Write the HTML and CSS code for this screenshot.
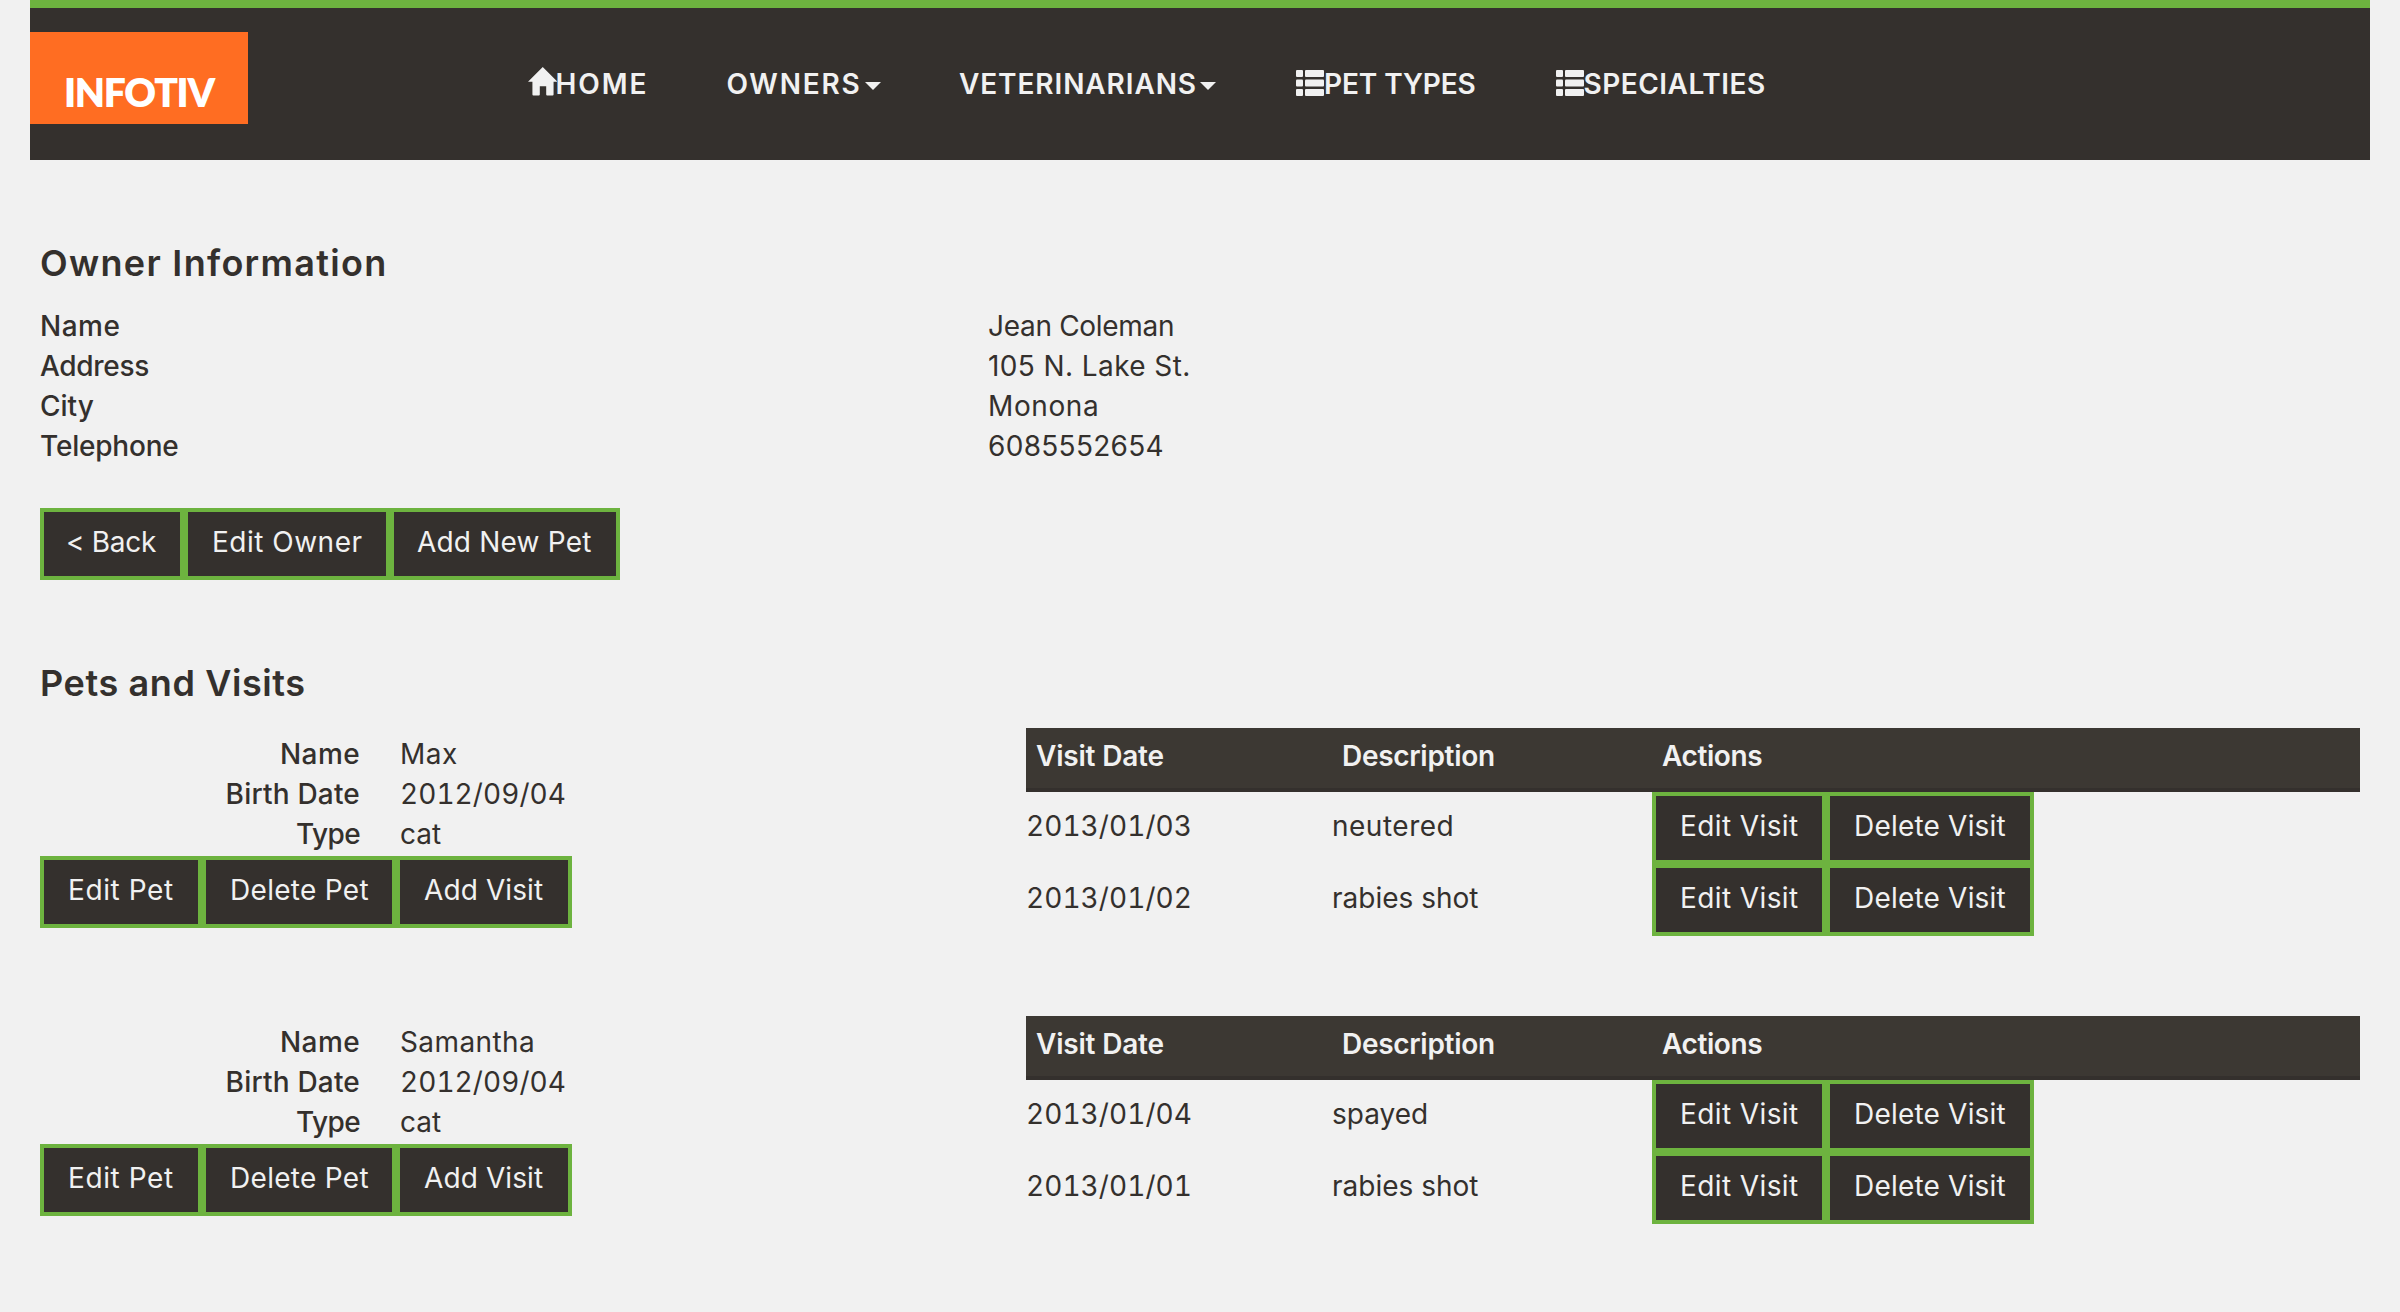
FILE: index.html
```html
<!DOCTYPE html>
<html lang="en">
<head>
<meta charset="utf-8">
<title>Owner Information</title>
<link rel="stylesheet" href="styles.css">
</head>
<body>
<header class="navbar">
  <a class="logo">INFOTIV</a>
  <nav class="menu">
    <a class="s19"><svg class="home" viewBox="0 0 30 30"><path d="M15 0 L30 15 H26 V28 Q26 29 25 29 H19.500 Q18.500 29 18.500 28 V19.500 H12 V28 Q12 29 11 29 H5.500 Q4.500 29 4.500 28 V15 H0 Z"/></svg>HOME</a>
    <a class="s18">OWNERS<i class="caret"></i></a>
    <a class="s09">VETERINARIANS<i class="caret"></i></a>
    <a class="s-01"><svg class="list" viewBox="0 0 28 26"><rect width="7" height="7" rx="1"/><rect x="9" width="19" height="7" rx="1"/><rect y="9.500" width="7" height="7" rx="1"/><rect x="9" y="9.500" width="19" height="7" rx="1"/><rect y="19" width="7" height="7" rx="1"/><rect x="9" y="19" width="19" height="7" rx="1"/></svg>PET TYPES</a>
    <a class="s05"><svg class="list" viewBox="0 0 28 26"><rect width="7" height="7" rx="1"/><rect x="9" width="19" height="7" rx="1"/><rect y="9.500" width="7" height="7" rx="1"/><rect x="9" y="9.500" width="19" height="7" rx="1"/><rect y="19" width="7" height="7" rx="1"/><rect x="9" y="19" width="19" height="7" rx="1"/></svg>SPECIALTIES</a>
  </nav>
</header>
<main>
  <h2 class="s13">Owner Information</h2>
  <dl class="owner">
    <dt class="s05">Name</dt><dd class="s-03">Jean Coleman</dd>
    <dt class="s-03">Address</dt><dd class="s04">105 N. Lake St.</dd>
    <dt>City</dt><dd class="s06">Monona</dd>
    <dt class="s-02">Telephone</dt><dd class="s03">6085552654</dd>
  </dl>
  <div class="buttons owner-buttons">
    <a class="btn back s-03">&lt; Back</a><a class="btn edit-owner s05">Edit Owner</a><a class="btn new-pet s02">Add New Pet</a>
  </div>
  <h2 class="s06">Pets and Visits</h2>
  <section class="pet">
    <div class="pet-info">
      <dl>
        <dt class="s04">Name</dt><dd class="s05">Max</dd>
        <dt class="s02">Birth Date</dt><dd class="date">2012/09/04</dd>
        <dt class="s-06">Type</dt><dd>cat</dd>
      </dl>
      <div class="buttons">
        <a class="btn edit-pet s06">Edit Pet</a><a class="btn delete-pet s03">Delete Pet</a><a class="btn add-visit s01">Add Visit</a>
      </div>
    </div>
    <div class="visits">
      <div class="visit head"><span class="s-02">Visit Date</span><span class="s-03">Description</span><span class="s-04">Actions</span></div>
      <div class="visit"><span class="date">2013/01/03</span><span class="s05">neutered</span><div class="buttons"><a class="btn edit-visit s04">Edit Visit</a><a class="btn delete-visit s02">Delete Visit</a></div></div>
      <div class="visit"><span class="date">2013/01/02</span><span>rabies shot</span><div class="buttons"><a class="btn edit-visit s04">Edit Visit</a><a class="btn delete-visit s02">Delete Visit</a></div></div>
    </div>
  </section>
  <section class="pet">
    <div class="pet-info">
      <dl>
        <dt class="s04">Name</dt><dd class="s04">Samantha</dd>
        <dt class="s02">Birth Date</dt><dd class="date">2012/09/04</dd>
        <dt class="s-06">Type</dt><dd>cat</dd>
      </dl>
      <div class="buttons">
        <a class="btn edit-pet s06">Edit Pet</a><a class="btn delete-pet s03">Delete Pet</a><a class="btn add-visit s01">Add Visit</a>
      </div>
    </div>
    <div class="visits">
      <div class="visit head"><span class="s-02">Visit Date</span><span class="s-03">Description</span><span class="s-04">Actions</span></div>
      <div class="visit"><span class="date">2013/01/04</span><span>spayed</span><div class="buttons"><a class="btn edit-visit s04">Edit Visit</a><a class="btn delete-visit s02">Delete Visit</a></div></div>
      <div class="visit"><span class="date">2013/01/01</span><span>rabies shot</span><div class="buttons"><a class="btn edit-visit s04">Edit Visit</a><a class="btn delete-visit s02">Delete Visit</a></div></div>
    </div>
  </section>
</main>
</body>
</html>
```
FILE: styles.css
```css
* { box-sizing: border-box; }
body {
  margin: 0;
  background: #f1f1f1;
  color: #34302d;
  font: 28px/40px Inter, "Liberation Sans", sans-serif;
}
h2, dl, dd { margin: 0; }

.navbar {
  display: flex;
  height: 160px;
  margin: 0 30px;
  border-top: 8px solid #6db33f;
  background: #34302d;
  color: #f1f1f1;
}
.logo {
  width: 218px;
  height: 92px;
  margin: 24px 279.500px 0 0;
  padding: 38px 0 0 34px;
  background: #ff6d22;
  color: #fff;
  font: 800 39px/44px Lato, sans-serif;
  letter-spacing: -1.300px;
}
.menu {
  display: grid;
  grid-template-columns: 199px 232.500px 337px 259.500px 260px;
  margin-top: 56px;
  font-weight: 600;
  white-space: nowrap;
}
.menu a { display: flex; height: 40px; }
.menu svg { flex: none; fill: #f1f1f1; }
.home { width: 29.500px; height: 29.500px; margin: 3px -1.500px 0 0; }
.list { width: 28px; height: 26px; margin: 6px 0 0; }
.caret {
  height: 8px;
  margin: 18px 0 0 3px;
  border: 8px solid transparent;
  border-top-color: #f1f1f1;
  border-bottom: 0;
}

main { padding: 83px 40px 0; }
h2 { height: 40px; font-size: 36px; line-height: 40px; font-weight: 600; }
dt { font-weight: 500; }
.owner {
  display: grid;
  grid-template-columns: 948px 1fr;
  margin: 23px 0 42px;
}
.owner-buttons { margin-bottom: 83px; }
.buttons { display: flex; }
.btn {
  height: 72px;
  padding: 10px 0 0 24px;
  border: 4px solid #6db33f;
  background: #34302d;
  color: #f1f1f1;
  white-space: nowrap;
}
.back { width: 144px; padding-left: 22px; }
.edit-owner { width: 206px; }
.new-pet { width: 230px; padding-left: 23px; }
.edit-pet { width: 162px; }
.delete-pet { width: 194px; }
.add-visit { width: 176px; }
.edit-visit { width: 174px; }
.delete-visit { width: 208px; }

.pet { display: flex; height: 288px; }
h2 + .pet { margin-top: 25px; }
.pet-info { width: 986px; padding-top: 6px; }
.pet-info dl {
  display: grid;
  grid-template-columns: 320px 1fr;
  column-gap: 40px;
  margin-bottom: 2px;
}
.pet-info dt { text-align: right; }
.date { letter-spacing: 0.050px; font-variant-numeric: tabular-nums; }
.visits { width: 1334px; }
.visit { display: grid; grid-template-columns: 306px 320px 1fr; height: 72px; }
.visit > span { padding-top: 14px; }
.visit.head {
  height: 64px;
  border-bottom: 4px solid #34302d;
  background: #3c3833;
  color: #f1f1f1;
  font-weight: 600;
}
.visit.head > span { padding: 8px 0 0 10px; }

/* tracking steps, in tenths of a pixel */
.s-06 { letter-spacing: -0.600px; }
.s-04 { letter-spacing: -0.400px; }
.s-03 { letter-spacing: -0.300px; }
.s-02 { letter-spacing: -0.200px; }
.s-01 { letter-spacing: -0.100px; }
.s01 { letter-spacing: 0.100px; }
.s02 { letter-spacing: 0.200px; }
.s03 { letter-spacing: 0.300px; }
.s04 { letter-spacing: 0.400px; }
.s05 { letter-spacing: 0.500px; }
.s06 { letter-spacing: 0.600px; }
.s09 { letter-spacing: 0.900px; }
.s13 { letter-spacing: 1.300px; }
.s18 { letter-spacing: 1.800px; }
.s19 { letter-spacing: 1.900px; }
```
